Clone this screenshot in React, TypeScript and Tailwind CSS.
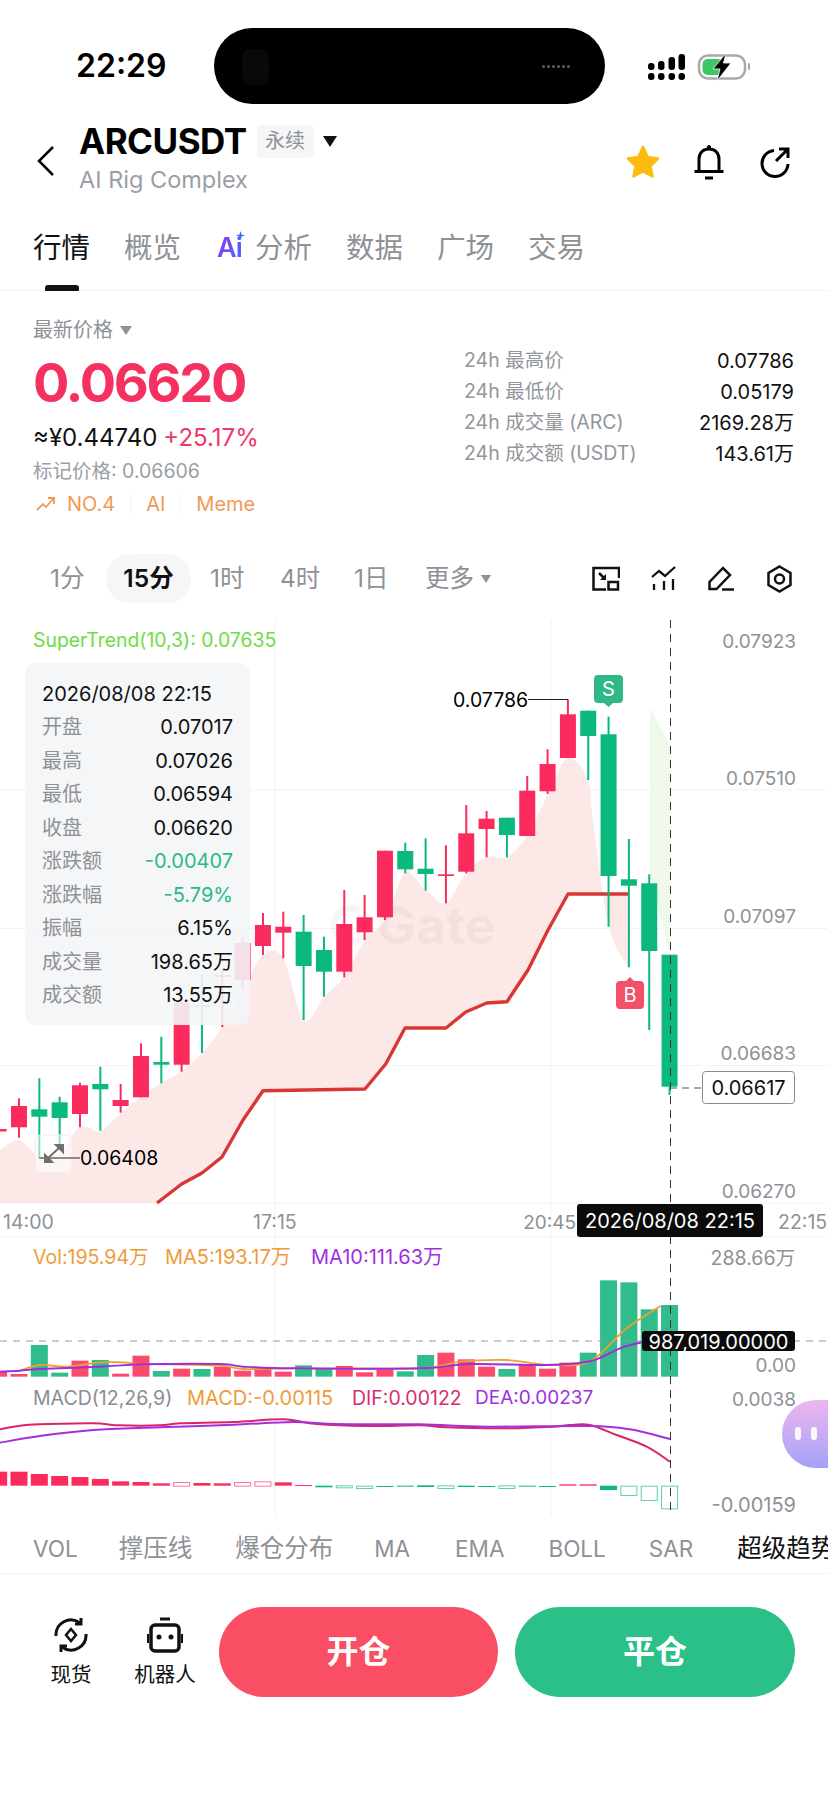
import React from "react";

const R = "#fb2b5d";
const G = "#0cb97c";
const VR = "#fb4a6c";
const VG = "#31bd8b";
const xAt = (k: number) => 19 + 20.33 * k;

// k = -1 ... 32 : bodyTop, bodyBottom, wickTop, wickBottom, colour
const candles: [number, number, number, number, "r" | "g"][] = [
  [1129, 1131.5, 1129, 1131.5, "r"],
  [1106, 1127.3, 1098.3, 1137.7, "r"],
  [1109.3, 1116.7, 1078.3, 1158.3, "g"],
  [1102.3, 1118, 1096.7, 1150, "g"],
  [1085.3, 1114, 1082.7, 1127.3, "r"],
  [1084, 1089.3, 1066.7, 1130.7, "g"],
  [1100, 1106, 1084, 1112.7, "r"],
  [1056, 1097.3, 1043.3, 1097.3, "r"],
  [1062, 1064.7, 1036.7, 1083.3, "g"],
  [1003, 1064.7, 995, 1071.7, "r"],
  [1005, 1007, 975, 1053, "g"],
  [975, 977, 970, 1027, "r"],
  [943, 980, 937, 990, "r"],
  [925, 946, 913, 955, "r"],
  [926.7, 932.7, 911.7, 958.3, "r"],
  [931.7, 966, 915, 1020, "g"],
  [950, 971.7, 936.7, 996.7, "g"],
  [924, 971.7, 890, 977.3, "r"],
  [917.3, 932.3, 895, 940, "r"],
  [850.7, 917.3, 850.7, 920, "r"],
  [851, 869.3, 842.7, 873.3, "g"],
  [868.7, 874, 838.3, 890.7, "g"],
  [874.3, 876, 845.3, 903.3, "r"],
  [833.3, 871.7, 805, 873.3, "r"],
  [818.7, 829, 811, 857.3, "r"],
  [817.7, 835, 817.7, 857.3, "g"],
  [790.7, 836, 776, 836, "r"],
  [764, 791.3, 749.3, 794, "r"],
  [714.3, 758, 699.3, 758, "r"],
  [710.7, 736, 710.7, 780, "g"],
  [734.3, 876, 716.7, 926.7, "g"],
  [879.3, 885.7, 839, 967.3, "g"],
  [883.3, 951, 874.3, 1030, "g"],
  [954.7, 1086.7, 954.7, 1095, "g"],
];

const volTops: [number, "r" | "g"][] = [
  [455, "r"], [462, "r"], [375, "g"], [458, "g"], [422, "r"], [420, "g"], [461, "r"], [407, "r"], [453, "g"], [446, "r"], [447, "g"], [440, "r"],
  [452, "r"], [445, "r"], [455, "r"], [436, "g"], [447, "g"], [438, "r"], [457, "r"], [444, "r"], [454, "g"], [405, "g"], [398, "r"], [418, "r"],
  [440, "r"], [447, "g"], [432, "r"], [446, "r"], [428, "r"], [398, "g"], [181, "g"], [187, "g"], [268, "g"], [255, "g"],
];

// macd histogram: top, bottom (zoom units), colour, hollow
const macd: [number, number, "r" | "g", boolean][] = [
  [755, 797, "r", false], [755, 797, "r", false], [762, 797, "r", false], [768, 797, "r", false], [771, 797, "r", false], [777, 797, "r", false],
  [784, 797, "r", false], [786, 797, "r", false], [790, 797, "r", false], [786, 797, "r", true], [789, 797, "r", false], [790, 797, "r", false],
  [786, 797, "r", true], [784, 797, "r", true], [787, 797, "r", false], [795, 797, "r", false], [797, 802, "g", false], [796, 802, "g", true],
  [797, 804, "g", true], [798, 799, "g", false], [797, 800, "g", false], [796, 801, "g", false], [796, 804, "g", true], [797, 801, "g", false],
  [798, 800, "g", false], [796, 804, "g", true], [797, 800, "g", false], [798, 799, "g", false], [793, 797, "r", false], [793, 797, "r", false],
  [797, 810, "g", false], [797, 825, "g", true], [797, 840, "g", true], [797, 865, "g", true],
];

const v = (n: number) => 1220 + n / 3;
const pairs = (leftX: number, arr: number[][]): [number, number][] => arr.map(([a, b]) => [leftX + a / 3, v(b)]);

// Catmull-Rom smoothing through a list of points
function smooth(pts: [number, number][]) {
  let d = `M${pts[0][0]},${pts[0][1]}`;
  for (let i = 0; i < pts.length - 1; i++) {
    const p0 = pts[Math.max(i - 1, 0)];
    const p1 = pts[i];
    const p2 = pts[i + 1];
    const p3 = pts[Math.min(i + 2, pts.length - 1)];
    const c1x = p1[0] + (p2[0] - p0[0]) / 6;
    const c1y = p1[1] + (p2[1] - p0[1]) / 6;
    const c2x = p2[0] - (p3[0] - p1[0]) / 6;
    const c2y = p2[1] - (p3[1] - p1[1]) / 6;
    d += ` C${c1x},${c1y} ${c2x},${c2y} ${p2[0]},${p2[1]}`;
  }
  return d;
}

const volPurple = smooth([...pairs(0, [[0, 455], [60, 452], [120, 447], [300, 440], [430, 433], [660, 432], [730, 440], [880, 445], [1260, 445]]), ...pairs(420, [[150, 432], [380, 435], [510, 424], [600, 385], [665, 367]])]);
const volOrange = smooth([...pairs(0, [[60, 452], [120, 435], [200, 440], [300, 427], [370, 427], [420, 433], [480, 432], [660, 437], [730, 447], [880, 445], [1260, 445]]), ...pairs(420, [[120, 425], [260, 420], [340, 430], [400, 435], [510, 424], [620, 325], [722, 258]])]);
const dif = smooth([...pairs(0, [[0, 628], [60, 617], [120, 613], [280, 610], [360, 616], [480, 616], [540, 610], [700, 606], [850, 598], [950, 612], [1100, 618], [1260, 616]]), ...pairs(420, [[80, 622], [250, 625], [400, 620], [450, 615], [510, 615], [590, 645], [680, 680], [750, 725]])]);
const dea = smooth([...pairs(0, [[0, 668], [120, 648], [280, 630], [480, 622], [700, 614], [880, 606], [1000, 612], [1260, 613]]), ...pairs(420, [[200, 620], [510, 618], [630, 628], [750, 657]])]);

const lows: [number, number][] = [
  [0, 1150], [19, 1140], [39, 1156], [60, 1152], [80, 1127], [100, 1131], [120.7, 1113], [141, 1097], [161, 1083], [181.7, 1071], [202, 1053], [222, 1027],
  [243, 990], [263, 955], [283, 958], [303.7, 1020], [324, 997], [344, 977], [365, 940], [385, 920], [405, 873], [425.7, 890], [446, 903], [466, 873],
  [487, 857], [507, 857], [527, 836], [548, 794], [568, 758], [588, 780], [593, 820], [608.7, 926], [628, 967],
];
const trend: [number, number][] = [[157, 1203], [181.7, 1184], [202, 1173], [222, 1157], [243, 1120], [263, 1090.7], [365, 1089], [385.7, 1064], [405, 1028], [446, 1028], [465.7, 1012], [486.7, 1003], [507, 1001.7], [528, 970], [548, 930], [568, 894], [628, 894]];
const fillPath = smooth(lows) + " " + [[628, 894], ...[...trend].reverse().slice(1), [0, 1203]].map((p) => `L${p[0]},${p[1]}`).join(" ") + " Z";

function T({ x, y, fill = "#8e9196", size = 19, anchor = "start", children, weight }: { x: number; y: number; fill?: string; size?: number; anchor?: "start" | "middle" | "end"; children: React.ReactNode; weight?: number }) {
  return (
    <text x={x} y={y} fill={fill} fontSize={size} textAnchor={anchor} dominantBaseline="central" fontWeight={weight}>
      {children}
    </text>
  );
}

function Chart() {
  return (
    <svg className="absolute left-0 top-0" width={828} height={904} viewBox="0 620 828 904">
      {/* grid */}
      <g stroke="#f2f3f5" strokeWidth={1}>
        {[790, 928.5, 1065.5, 1203, 1237].map((y) => <line key={y} x1={0} x2={828} y1={y} y2={y} />)}
        <line x1={275} x2={275} y1={620} y2={1516} />
        <line x1={551} x2={551} y1={620} y2={1516} />
      </g>
      <path d={fillPath} fill="#fde8e8" />
      <polygon points="650,708 670,745 670,955 650,876" fill="#eef9ea" />
      {/* watermark */}
      <g opacity={0.03}>
        <path d="M368,925 a17,17 0 1 1 -8,-14" fill="none" stroke="#000" strokeWidth={7} />
        <T x={377} y={925} fill="#000" size={52} weight={700}>Gate</T>
      </g>
      <polyline points={trend.map((p) => p.join(",")).join(" ")} fill="none" stroke="#d93636" strokeWidth={3.400} strokeLinejoin="round" />
      {/* candles */}
      {candles.map(([t, b, wt, wb, c], i) => {
        const x = xAt(i - 1);
        const col = c === "r" ? R : G;
        return (
          <g key={i} fill={col}>
            <rect x={x - 1} y={wt} width={2} height={wb - wt} />
            <rect x={x - 8} y={t} width={16} height={b - t} />
          </g>
        );
      })}
      {/* high / low markers */}
      <line x1={528} x2={568} y1={699.5} y2={699.5} stroke="#222" strokeWidth={1.2} />
      <T x={453} y={700} fill="#000" size={19.500}>0.07786</T>
      <rect x={35} y={1135} width={37} height={38} rx={6} fill="#ffffff" fillOpacity={0.55} stroke="#f1ecec" />
      <line x1={39.3} x2={80} y1={1158} y2={1158} stroke="#222" strokeWidth={1.2} />
      <T x={80} y={1158} fill="#000" size={19.500}>0.06408</T>
      <g stroke="#6f6f72" strokeWidth={2} fill="#6f6f72">
        <line x1={46} y1={1160} x2={61} y2={1146} />
        <polygon points="45,1155 45,1162 52,1162" />
        <polygon points="56,1145 63,1145 63,1152" />
      </g>
      {/* S / B */}
      <path d="M598,675 h21 a4,4 0 0 1 4,4 v20 a4,4 0 0 1 -4,4 h-6 l-4.500,4 l-4.500,-4 h-6 a4,4 0 0 1 -4,-4 v-20 a4,4 0 0 1 4,-4 z" fill="#2fb986" />
      <T x={608.500} y={689} fill="#ffffff" anchor="middle" size={20}>S</T>
      <path d="M620,981 h6 l4,-4 l4,4 h6 a4,4 0 0 1 4,4 v20 a4,4 0 0 1 -4,4 h-20 a4,4 0 0 1 -4,-4 v-20 a4,4 0 0 1 4,-4 z" fill="#f4506a" />
      <T x={630} y={995} fill="#ffffff" anchor="middle" size={20}>B</T>
      {/* price axis */}
      <T x={796} y={641} anchor="end">0.07923</T>
      <T x={796} y={778} anchor="end">0.07510</T>
      <T x={796} y={916} anchor="end">0.07097</T>
      <T x={796} y={1053} anchor="end">0.06683</T>
      <T x={796} y={1191.500} anchor="end">0.06270</T>
      <T x={3} y={1222} size={19.500}>14:00</T>
      <T x={253} y={1222} size={19.500}>17:15</T>
      <T x={576} y={1222} anchor="end" size={19}>20:45</T>
      <T x={778} y={1222} size={19.500}>22:15</T>
      {/* volume */}
      <T x={33} y={1257} fill="#ef9b3c" size={19.500}>Vol:195.94万</T>
      <T x={165} y={1257} fill="#ef9b3c" size={20}>MA5:193.17万</T>
      <T x={311} y={1257} fill="#a02fe0" size={20}>MA10:111.63万</T>
      <T x={795} y={1258} anchor="end" size={19.500}>288.66万</T>
      <T x={796} y={1365.500} anchor="end">0.00</T>
      {volTops.map(([t, c], i) => {
        const x = xAt(i - 1);
        return <rect key={i} x={x - 8.500} y={v(t)} width={17} height={v(470) - v(t)} fill={c === "r" ? VR : VG} />;
      })}
      <line x1={0} x2={828} y1={1341} y2={1341} stroke="#9a9a9a" strokeWidth={1.2} strokeDasharray="7 6" />
      <path d={volOrange} fill="none" stroke="#f0a030" strokeWidth={1.800} />
      <path d={volPurple} fill="none" stroke="#9c2fdc" strokeWidth={2} />
      {/* macd */}
      <T x={33} y={1397.500} fill="#8a8d93" size={19.500}>MACD(12,26,9)</T>
      <T x={187} y={1397.500} fill="#ef9b3c" size={20}>MACD:-0.00115</T>
      <T x={352} y={1397.500} fill="#d92c70" size={19.500}>DIF:0.00122</T>
      <T x={475} y={1397.500} fill="#a02fe0" size={19}>DEA:0.00237</T>
      <T x={796} y={1399} anchor="end">0.0038</T>
      <T x={796} y={1505} anchor="end" size={20}>-0.00159</T>
      <path d={dif} fill="none" stroke="#db2466" strokeWidth={2} />
      <path d={dea} fill="none" stroke="#a62fdc" strokeWidth={2} />
      {macd.map(([t, b, c, hollow], i) => {
        const x = xAt(i - 1);
        const col = c === "r" ? R : G;
        return hollow ? (
          <rect key={i} x={x - 8} y={v(t) + 0.500} width={16} height={v(b) - v(t)} fill="#fff" stroke={col} strokeOpacity={0.65} strokeWidth={1} />
        ) : (
          <rect key={i} x={x - 8.500} y={v(t)} width={17} height={Math.max(v(b) - v(t), 1)} fill={col} />
        );
      })}
      {/* crosshair */}
      <line x1={670.500} x2={670.500} y1={620} y2={1516} stroke="#333" strokeWidth={1} strokeDasharray="8 6" />
      <line x1={670} x2={702} y1={1088} y2={1088} stroke="#555" strokeWidth={1.2} strokeDasharray="7 5" />
      <rect x={702.500} y={1071.500} width={92} height={32} rx={3} fill="#fff" stroke="#8a8a8a" />
      <T x={748.500} y={1088} fill="#111" anchor="middle" size={20}>0.06617</T>
      <rect x={577} y={1204} width={186} height={33} rx={3} fill="#0b0b0b" />
      <T x={670} y={1220.500} fill="#fff" anchor="middle" size={20}>2026/08/08 22:15</T>
      <rect x={642} y={1331} width={153} height={20} rx={3} fill="#0b0b0b" />
      <T x={718.500} y={1341.500} fill="#fff" anchor="middle" size={20}>987,019.00000</T>
      {/* super trend legend */}
      <T x={33} y={640} fill="#6edc45" size={19.400}>SuperTrend(10,3): 0.07635</T>
    </svg>
  );
}

function TipRow({ label, value, color = "text-[#111]" }: { label: string; value: string; color?: string }) {
  return (
    <div className="flex h-[33.5px] items-center justify-between">
      <span className="text-[#8e9196]">{label}</span>
      <span className={color}>{value}</span>
    </div>
  );
}

function Tooltip() {
  return (
    <div className="absolute left-[25px] top-[43px] h-[362px] w-[225px] rounded-[10px] bg-[#f3f5f7]/90 pl-[17px] pr-[17px] pt-[14px] text-[20px]">
      <div className="flex h-[33.5px] items-center text-[#111]">2026/08/08 22:15</div>
      <TipRow label="开盘" value="0.07017" />
      <TipRow label="最高" value="0.07026" />
      <TipRow label="最低" value="0.06594" />
      <TipRow label="收盘" value="0.06620" />
      <TipRow label="涨跌额" value="-0.00407" color="text-[#2bb98a]" />
      <TipRow label="涨跌幅" value="-5.79%" color="text-[#2bb98a]" />
      <TipRow label="振幅" value="6.15%" />
      <TipRow label="成交量" value="198.65万" />
      <TipRow label="成交额" value="13.55万" />
    </div>
  );
}

function StatRow({ label, value }: { label: string; value: string }) {
  return (
    <div className="flex h-[31px] items-center justify-between text-[19.5px]">
      <span className="text-[#93969c]">{label}</span>
      <span className="text-[20px] text-[#111]">{value}</span>
    </div>
  );
}

const Caret = ({ className }: { className: string }) => <span className={`inline-block h-0 w-0 border-x-transparent ${className}`} />;

export default function App() {
  return (
    <div className="relative h-[1801px] w-[828px] overflow-hidden bg-white [font-family:Inter,'Noto_Sans_CJK_SC',sans-serif]">
      {/* status bar */}
      <div className="flex h-[104px] items-start pt-[28px]">
        <div className="flex h-[76px] w-[214px] items-center pl-[76px] text-[32px] font-semibold text-black">22:29</div>
        <div className="relative h-[76px] w-[391px] rounded-[38px] bg-black">
          <div className="absolute left-[28px] top-[21px] h-[36px] w-[27px] rounded-[8px] bg-[#09090b]" />
          <div className="absolute left-[328px] top-[37px] flex gap-[2px]">
            {[0, 1, 2, 3, 4, 5].map((i) => <span key={i} className="h-[3px] w-[3px] rounded-full bg-[#5c5c5c]" />)}
          </div>
        </div>
        <svg className="ml-[43px] mt-[24px]" width={104} height={30} viewBox="648 52 104 30">
          <g fill="#000">
            {[648, 658, 668.500, 678.500].map((x) => <rect key={x} x={x} y={73} width={6.500} height={7} rx={3} />)}
            <rect x={648} y={63} width={6.500} height={7} rx={3} />
            <rect x={658} y={61} width={6.500} height={9} rx={3} />
            <rect x={668.500} y={57} width={6.500} height={13} rx={3} />
            <rect x={678.500} y={54} width={6.500} height={16} rx={3} />
          </g>
          <rect x={699} y={55.500} width={46} height={23} rx={9} fill="#fff" stroke="#a9a9a9" strokeWidth={2.500} />
          <rect x={702.500} y={59} width={20} height={16} rx={5} fill="#3cc864" />
          <rect x={748} y={63} width={2} height={7} rx={1} fill="#a9a9a9" />
          <path d="M726,53 L713,69 L720,69 L717,81 L731,63 L723.500,63 Z" fill="#000" stroke="#fff" strokeWidth={0.800} />
        </svg>
      </div>
      {/* header */}
      <div className="flex h-[91px] pt-[18px]">
        <svg className="ml-[37px] mt-[24px]" width={18} height={30} viewBox="0 0 18 30" fill="none" stroke="#000" strokeWidth={2.500}>
          <polyline points="16,1 2,15 16,29" />
        </svg>
        <div className="ml-[24px]">
          <div className="flex h-[38px] items-center">
            <span className="text-[35px] font-bold leading-none tracking-[-0.5px] text-black">ARCUSDT</span>
            <span className="ml-[10px] flex h-[33px] w-[57px] items-center justify-center rounded-[4px] bg-[#f5f6f7] text-[20px] text-[#8e9196]">永续</span>
            <Caret className="ml-[9px] border-x-[7px] border-t-[11px] border-t-[#111]" />
          </div>
          <div className="mt-[5px] h-[30px] text-[23.5px] leading-[30px] text-[#9a9ea6]">AI Rig Complex</div>
        </div>
        <svg className="ml-auto mt-[22px]" width={36} height={36} viewBox="0 0 36 36">
          <polygon points="18,3 22.800,13 33,14.500 25.500,22 27.500,32.500 18,27.500 8.500,32.500 10.500,22 3,14.500 13.200,13" fill="#fdbb0f" stroke="#fdbb0f" strokeWidth={2.500} strokeLinejoin="round" />
        </svg>
        <svg className="ml-[32px] mt-[22px]" width={32} height={36} viewBox="0 0 32 36" fill="none" stroke="#000" strokeWidth={3}>
          <path d="M6,27 V15 C6,9 10,5 16,5 C22,5 26,9 26,15 V27" />
          <path d="M1.500,27.500 H30.500" />
          <path d="M12,34 H20" />
          <circle cx={16} cy={3} r={1.500} fill="#000" strokeWidth={1} />
        </svg>
        <svg className="ml-[34px] mr-[37px] mt-[24px]" width={32} height={32} viewBox="0 0 32 32" fill="none" stroke="#000" strokeWidth={3}>
          <path d="M15,4.500 A13,13 0 1 0 29,18" />
          <path d="M17,15 L28,4 M20,3 H29 V12" />
        </svg>
      </div>
      {/* tabs */}
      <div className="relative h-[96px] border-b border-[#f2f3f5] pt-[33px]">
        <div className="flex h-[40px] items-center gap-[34px] pl-[33px] text-[28.5px] text-[#8e9196]">
          <span className="text-[#111]">行情</span>
          <span>概览</span>
          <span className="ml-[2px] flex items-center">
            <span className="relative mr-[10px] w-[28px] text-[27px] font-semibold tracking-[-1px]">
              <span className="bg-linear-to-br from-[#8a2be8] to-[#2f6bff] bg-clip-text text-transparent">Ai</span>
              <svg className="absolute right-[0px] top-[3px]" width={9} height={9} viewBox="0 0 9 9" fill="#2f6bff">
                <path d="M4.500,0 L5.500,3.500 L9,4.500 L5.500,5.500 L4.500,9 L3.500,5.500 L0,4.500 L3.500,3.500 Z" />
              </svg>
            </span>
            分析
          </span>
          <span>数据</span>
          <span>广场</span>
          <span>交易</span>
        </div>
        <div className="absolute bottom-[-1px] left-[45px] h-[6px] w-[34px] rounded-t-[3px] rounded-b-[1px] bg-[#111]" />
      </div>
      {/* price info */}
      <div className="flex h-[226px]">
        <div className="pl-[33px] pt-[26px]">
          <div className="flex h-[26px] items-center text-[20px] text-[#8e9196]">
            最新价格
            <Caret className="ml-[7px] border-x-[6px] border-t-[9px] border-t-[#8e9196]" />
          </div>
          <div className="mt-[10px] h-[60px] text-[54px] font-bold leading-[60px] tracking-[-2.3px] text-[#f5325f]">0.06620</div>
          <div className="mt-[11px] flex h-[28px] items-center whitespace-nowrap text-[24px]">
            <span className="text-[#111]">≈¥0.44740</span>
            <span className="ml-[6px] text-[#f0386b]">+25.17%</span>
          </div>
          <div className="mt-[6px] h-[26px] text-[19.5px] leading-[26px] text-[#9a9ea6]">标记价格: 0.06606</div>
          <div className="mt-[7px] flex h-[26px] items-center text-[20px] text-[#f09a56]">
            <svg className="ml-[3px]" width={20} height={16} viewBox="0 0 20 16" fill="none" stroke="#f09a56" strokeWidth={1.800}>
              <polyline points="1,14 7,8 10,11 18,2" />
              <polyline points="12,2 18,2 18,8" />
            </svg>
            <span className="ml-[11px]">NO.4</span>
            <span className="mx-[15px] h-[20px] w-px bg-[#f4f4f4]" />
            <span>AI</span>
            <span className="mx-[15px] h-[20px] w-px bg-[#f4f4f4]" />
            <span>Meme</span>
          </div>
        </div>
        <div className="ml-auto mr-[34px] mt-[54px] w-[330px]">
          <StatRow label="24h 最高价" value="0.07786" />
          <StatRow label="24h 最低价" value="0.05179" />
          <StatRow label="24h 成交量 (ARC)" value="2169.28万" />
          <StatRow label="24h 成交额 (USDT)" value="143.61万" />
        </div>
      </div>
      {/* timeframe row */}
      <div className="mt-[37px] flex h-[49px] items-center pl-[50px] text-[24.5px] text-[#8e9196]">
        <span className="w-[37px] whitespace-nowrap">1分</span>
        <span className="ml-[19px] flex h-[49px] w-[85px] items-center justify-center rounded-[24px] bg-[#f6f6f6] font-semibold text-[#111]">15分</span>
        <span className="ml-[19px] w-[36px] whitespace-nowrap">1时</span>
        <span className="ml-[34px] w-[38px] whitespace-nowrap">4时</span>
        <span className="ml-[36px] w-[34px] whitespace-nowrap">1日</span>
        <span className="ml-[37px] w-[48px] whitespace-nowrap">更多</span>
        <Caret className="ml-[8px] border-x-[5px] border-t-[8px] border-t-[#8e9196]" />
        <svg className="ml-[101px]" width={28} height={25} viewBox="0 0 28 25" fill="none" stroke="#111" strokeWidth={2.500}>
          <path d="M27,12 V2 H1.500 V23.500 H14" />
          <rect x={16.500} y={16} width={9.500} height={7.500} />
          <path d="M7,7 L13,13" />
          <polygon points="14,14 14,8 8,14" fill="#111" stroke="none" />
        </svg>
        <svg className="ml-[31px]" width={25} height={25} viewBox="0 0 25 25" fill="none" stroke="#111" strokeWidth={2.300}>
          <polyline points="1,11 8,5 14,10 24,1" />
          <path d="M3,18 V24 M13,15 V24 M22,13 V24" />
        </svg>
        <svg className="ml-[32px]" width={27} height={25} viewBox="0 0 27 25" fill="none" stroke="#111" strokeWidth={2.500}>
          <path d="M1.500,23 V16 L15,2 L22,9 L8.500,23 Z" />
          <path d="M14,23.500 H26" />
        </svg>
        <svg className="ml-[32px]" width={25} height={28} viewBox="0 0 25 28" fill="none" stroke="#111" strokeWidth={2.500}>
          <polygon points="12.500,1.500 23.500,8 23.500,20 12.500,26.500 1.500,20 1.500,8" />
          <circle cx={12.500} cy={14} r={4.500} />
        </svg>
      </div>
      {/* chart */}
      <div className="relative mt-[17px] h-[904px] overflow-hidden">
        <Chart />
        <Tooltip />
        <div className="absolute right-0 top-[780px] h-[68px] w-[46px] rounded-l-[34px] bg-linear-to-b from-[#ecb6ee] to-[#a3a2f8]">
          <span className="absolute left-[13px] top-[27px] h-[13px] w-[6px] rounded-[3px] bg-white/90" />
          <span className="absolute left-[29px] top-[27px] h-[13px] w-[6px] rounded-[3px] bg-white/90" />
        </div>
      </div>
      {/* indicator tabs */}
      <div className="flex h-[50px] items-center gap-[43px] overflow-hidden whitespace-nowrap border-b border-[#f2f3f5] pl-[33px] text-[22.5px] text-[#8e9196]">
        <span>VOL</span>
        <span className="-ml-[2px] text-[24.5px]">撑压线</span>
        <span className="text-[24.5px]">爆仓分布</span>
        <span className="-ml-[2px]">MA</span>
        <span className="ml-[2px]">EMA</span>
        <span className="ml-[1px]">BOLL</span>
        <span>SAR</span>
        <span className="ml-[1px] text-[24.5px] text-[#111]">超级趋势</span>
      </div>
      {/* bottom actions */}
      <div className="flex items-center pl-[33px] pt-[33px]">
        <div className="flex w-[76px] flex-col items-center text-[#111]">
          <svg width={36} height={36} viewBox="0 0 36 36" fill="none" stroke="#111" strokeWidth={3}>
            <path d="M3,19 A15,15 0 0 1 27,6" />
            <path d="M33,17 A15,15 0 0 1 9,30" />
            <polyline points="28,1 28,7 22,7" />
            <polyline points="8,35 8,29 14,29" />
            <polygon points="18,12 23,18 18,24 13,18" strokeWidth={2.500} />
          </svg>
          <span className="mt-[9px] text-[20.5px] leading-[26px]">现货</span>
        </div>
        <div className="ml-[18px] flex w-[76px] flex-col items-center text-[#111]">
          <svg width={36} height={36} viewBox="0 0 36 36" fill="none" stroke="#111" strokeWidth={3.500}>
            <path d="M13,2 H23" strokeWidth={3} />
            <rect x={4} y={8} width={28} height={26} rx={4} />
            <path d="M1,17 V26 M35,17 V26" strokeWidth={2} />
            <circle cx={12} cy={20} r={2.500} fill="#111" stroke="none" />
            <circle cx={24} cy={20} r={2.500} fill="#111" stroke="none" />
          </svg>
          <span className="mt-[9px] whitespace-nowrap text-[20.5px] leading-[26px]">机器人</span>
        </div>
        <div className="ml-[16px] flex h-[90px] w-[279px] items-center justify-center rounded-[45px] bg-[#f94e63] text-[32px] font-bold text-white">开仓</div>
        <div className="ml-[17px] flex h-[90px] w-[280px] items-center justify-center rounded-[45px] bg-[#2ac087] text-[32px] font-bold text-white">平仓</div>
      </div>
    </div>
  );
}
